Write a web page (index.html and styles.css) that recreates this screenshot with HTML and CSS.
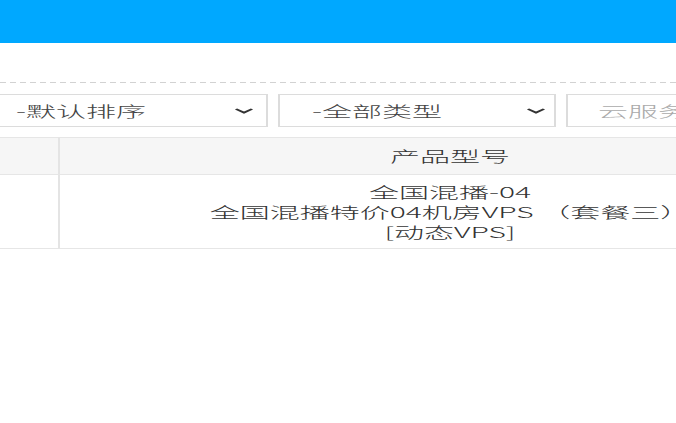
FILE: index.html
```html
<!DOCTYPE html>
<html lang="zh-CN">
<head>
<meta charset="utf-8">
<title>产品列表</title>
<link rel="stylesheet" href="styles.css">
</head>
<body>
<div class="stage">
  <header class="topbar"></header>
  <div class="dash"></div>
  <div class="filters">
    <div class="sel sel-first">
      <span class="sel-text">-默认排序</span>
      <svg class="chev" width="10" height="6" viewBox="0 0 10 6"><polyline points="1,1 5,4.6 9,1" fill="none" stroke="#333" stroke-width="1.6"/></svg>
    </div>
    <div class="sel">
      <span class="sel-text">-全部类型</span>
      <svg class="chev" width="10" height="6" viewBox="0 0 10 6"><polyline points="1,1 5,4.6 9,1" fill="none" stroke="#333" stroke-width="1.6"/></svg>
    </div>
    <div class="sel sel-search">
      <span class="placeholder">云服务器名称</span>
    </div>
  </div>
  <div class="grid">
    <div class="cell head c1"></div>
    <div class="cell head c2">产品型号</div>
    <div class="cell head c3"></div>
    <div class="cell body c1"></div>
    <div class="cell body c2">
      <div class="line">全国混播-04</div>
      <div class="line">全国混播特价04机房VPS （套餐三）</div>
      <div class="line">[动态VPS]</div>
    </div>
    <div class="cell body c3"></div>
  </div>
</div>
</body>
</html>
```
FILE: styles.css
```css
html, body {
  margin: 0;
  padding: 0;
  overflow: hidden;
  background: #fff;
  width: 676px;
  height: 423px;
}
.stage {
  width: 338px;
  transform: scaleX(2);
  transform-origin: 0 0;
  font-family: "Noto Sans CJK SC", "Noto Sans", sans-serif;
  font-weight: 300;
  color: #333;
  font-size: 15px;
}
.topbar {
  height: 43px;
  background: #00a8ff;
}
.dash {
  margin-top: 39px;
  border-top: 1px dashed #d2d2d2;
}
.filters {
  display: flex;
  gap: 5px;
  margin-top: 11px;
  margin-left: -5px;
  width: 600px;
}
.sel {
  flex: none;
  box-sizing: border-box;
  width: 139px;
  height: 33px;
  border: 1px solid #dcdcdc;
  display: flex;
  align-items: center;
  justify-content: space-between;
  padding: 0 4px 0 16px;
}
.sel-first {
  padding-left: 12px;
  padding-right: 6px;
}
.sel-search {
  padding-left: 15px;
}
.sel-text {
  line-height: 20px;
  color: #444;
}
.placeholder {
  color: #aaa;
  line-height: 20px;
}
.chev {
  display: block;
}
.grid {
  margin-top: 10px;
  margin-left: -10px;
  display: grid;
  grid-template-columns: 40px 391px 200px;
  width: 631px;
}
.cell {
  box-sizing: border-box;
  border-right: 1px solid #e4e4e4;
  border-bottom: 1px solid #e6e6e6;
  text-align: center;
}
.head {
  height: 38px;
  background: #f6f6f6;
  border-top: 1px solid #e6e6e6;
  line-height: 36px;
  color: #333;
}
.body {
  height: 74px;
  padding-top: 7px;
  background: #fff;
}
.line {
  line-height: 20px;
  white-space: nowrap;
}
```
